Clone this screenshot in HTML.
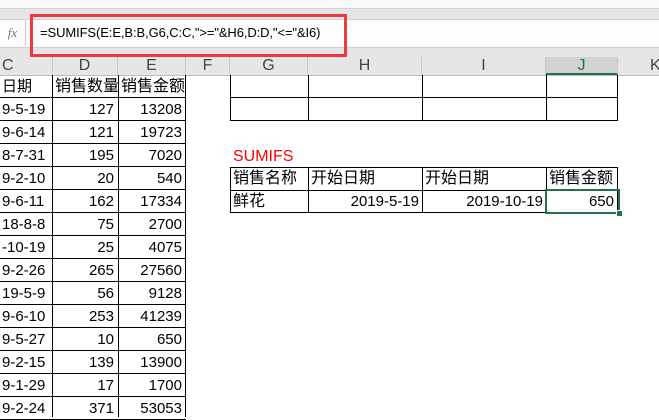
<!DOCTYPE html>
<html><head><meta charset="utf-8"><style>
body{margin:0;width:659px;height:417px;overflow:hidden;background:#fff;position:relative;font-family:"Liberation Sans","Noto Sans CJK SC",sans-serif}
.a{position:absolute}
.t{position:absolute;font-size:15px;color:#000;line-height:23px;white-space:nowrap}
.h{position:absolute;top:57px;height:18px;line-height:18px;font-size:16px;color:#444;text-align:center;border-right:1px solid #c8c8c8}
.vl{position:absolute;width:1px;background:#000}
.hl{position:absolute;height:1px;background:#000}
</style></head><body>
<div class="a" style="left:0;top:0;width:659px;height:8px;background:#fafafa;border-bottom:1px solid #d4d4d4"></div>
<div class="a" style="left:0;top:9px;width:659px;height:48px;background:#e6e6e6"></div>
<div class="a" style="left:0;top:19px;width:659px;height:27px;background:#fdfdfd;border-top:1px solid #cfcfcf;border-bottom:1px solid #cfcfcf"></div>
<div class="a" style="left:0;top:19px;width:25px;height:27px;border-right:1px solid #cfcfcf;font-family:'Liberation Serif',serif;font-style:italic;color:#777;font-size:13px;line-height:27px;text-align:center">fx</div>
<div class="a" style="left:30px;top:14px;width:311px;height:37px;border:3px solid #f0393e"></div>
<div class="t" style="left:40px;top:21px;font-size:13px;line-height:23px;letter-spacing:-0.1px">=SUMIFS(E:E,B:B,G6,C:C,"&gt;="&amp;H6,D:D,"&lt;="&amp;I6)</div>
<div class="a" style="left:0;top:57px;width:659px;height:18px;background:#e6e6e6;border-bottom:1px solid #bdbdbd"></div>
<div class="h" style="left:0;width:52px;text-align:left;padding-left:2px;width:50px">C</div>
<div class="h" style="left:52px;width:65px">D</div>
<div class="h" style="left:118px;width:67px">E</div>
<div class="h" style="left:186px;width:43px">F</div>
<div class="h" style="left:230px;width:77px">G</div>
<div class="h" style="left:308px;width:113px">H</div>
<div class="h" style="left:422px;width:123px">I</div>
<div class="h" style="left:546px;width:71px;background:#d2d2d2;border-bottom:2px solid #217346;height:16px;color:#217346">J</div>
<div class="h" style="left:618px;width:45px;text-align:left;padding-left:32px;border:none">K</div>
<div id="L"></div>
<div class="t" style="left:233px;top:145px;color:#f00;font-size:16px">SUMIFS</div>
<script>
var L=document.getElementById('L'),s='';
var rows=[["日期","销售数量","销售金额"],["9-5-19","127","13208"],["9-6-14","121","19723"],["8-7-31","195","7020"],["9-2-10","20","540"],["9-6-11","162","17334"],["18-8-8","75","2700"],["-10-19","25","4075"],["9-2-26","265","27560"],["19-5-9","56","9128"],["9-6-10","253","41239"],["9-5-27","10","650"],["9-2-15","139","13900"],["9-1-29","17","1700"],["9-2-24","371","53053"]];
for(var i=0;i<rows.length;i++){var y=75+i*23;var r=rows[i];
s+='<div class="t" style="left:2px;top:'+y+'px">'+r[0]+'</div>';
if(i==0){s+='<div class="t" style="left:55px;top:'+y+'px;font-size:16px">'+r[1]+'</div><div class="t" style="left:121px;top:'+y+'px;font-size:16px">'+r[2]+'</div>';}
else{s+='<div class="t" style="left:52px;width:62px;text-align:right;top:'+y+'px">'+r[1]+'</div><div class="t" style="left:118px;width:64px;text-align:right;top:'+y+'px">'+r[2]+'</div>';}
s+='<div class="hl" style="left:0;width:186px;top:'+(y+22)+'px"></div>';}
s+='<div class="vl" style="left:52px;top:75px;height:342px"></div><div class="vl" style="left:118px;top:75px;height:342px"></div><div class="vl" style="left:185px;top:75px;height:342px"></div>';
var xs=[230,308,422,546,617];
for(var j=0;j<5;j++){s+='<div class="vl" style="left:'+xs[j]+'px;top:75px;height:46px"></div><div class="vl" style="left:'+xs[j]+'px;top:167px;height:46px"></div>';}
[97,120,167,190,212].forEach(function(y){s+='<div class="hl" style="left:230px;width:388px;top:'+y+'px"></div>';});
s+='<div class="t" style="left:233px;top:167px;font-size:16px">销售名称</div><div class="t" style="left:311px;top:167px;font-size:16px">开始日期</div><div class="t" style="left:425px;top:167px;font-size:16px">开始日期</div><div class="t" style="left:549px;top:167px;font-size:16px">销售金额</div>';
s+='<div class="t" style="left:233px;top:190px;font-size:16px">鲜花</div><div class="t" style="left:308px;width:111px;text-align:right;top:190px">2019-5-19</div><div class="t" style="left:422px;width:121px;text-align:right;top:190px">2019-10-19</div><div class="t" style="left:546px;width:68px;text-align:right;top:190px">650</div>';
s+='<div class="a" style="left:545px;top:189px;width:71px;height:21px;border:2px solid #217346"></div><div class="a" style="left:616px;top:210px;width:5px;height:5px;background:#217346;border:1px solid #fff"></div>';
L.innerHTML=s;
</script>
</body></html>
